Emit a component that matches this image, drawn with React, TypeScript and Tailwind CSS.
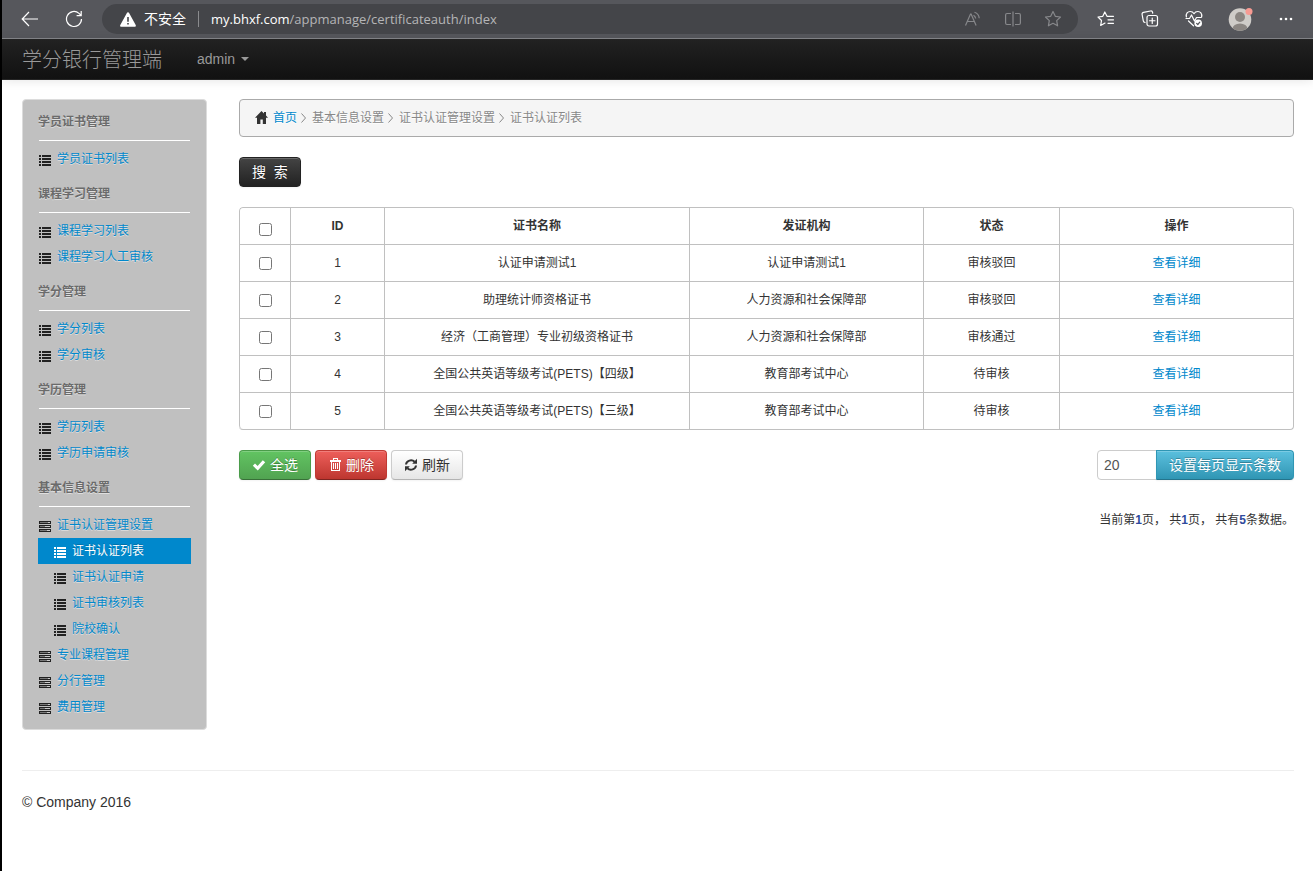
import { useState } from "react";
import type { ReactNode } from "react";
import clsx from "clsx";

type MenuItem = {
    name: string;
    icon: "list" | "tasks";
    sub?: boolean;
    active?: boolean;
};

type MenuGroup = {
    title: string;
    items: MenuItem[];
};

type Certificate = {
    id: number;
    name: string;
    org: string;
    status: string;
};

const menu: MenuGroup[] = [
    { title: "学员证书管理", items: [{ name: "学员证书列表", icon: "list" }] },
    {
        title: "课程学习管理",
        items: [
            { name: "课程学习列表", icon: "list" },
            { name: "课程学习人工审核", icon: "list" },
        ],
    },
    {
        title: "学分管理",
        items: [
            { name: "学分列表", icon: "list" },
            { name: "学分审核", icon: "list" },
        ],
    },
    {
        title: "学历管理",
        items: [
            { name: "学历列表", icon: "list" },
            { name: "学历申请审核", icon: "list" },
        ],
    },
    {
        title: "基本信息设置",
        items: [
            { name: "证书认证管理设置", icon: "tasks" },
            { name: "证书认证列表", icon: "list", sub: true, active: true },
            { name: "证书认证申请", icon: "list", sub: true },
            { name: "证书审核列表", icon: "list", sub: true },
            { name: "院校确认", icon: "list", sub: true },
            { name: "专业课程管理", icon: "tasks" },
            { name: "分行管理", icon: "tasks" },
            { name: "费用管理", icon: "tasks" },
        ],
    },
];

const certificates: Certificate[] = [
    { id: 1, name: "认证申请测试1", org: "认证申请测试1", status: "审核驳回" },
    { id: 2, name: "助理统计师资格证书", org: "人力资源和社会保障部", status: "审核驳回" },
    { id: 3, name: "经济（工商管理）专业初级资格证书", org: "人力资源和社会保障部", status: "审核通过" },
    { id: 4, name: "全国公共英语等级考试(PETS)【四级】", org: "教育部考试中心", status: "待审核" },
    { id: 5, name: "全国公共英语等级考试(PETS)【三级】", org: "教育部考试中心", status: "待审核" },
];

/* ---------- Icons ---------- */

function ListIcon() {
    return (
        <svg width="14" height="14" viewBox="0 0 14 14" fill="currentColor" shapeRendering="crispEdges">
            <path d="M1 1h2v2H1zM4 1h9v2H4zM1 4h2v2H1zM4 4h9v2H4zM1 7h2v2H1zM4 7h9v2H4zM1 10h2v2H1zM4 10h9v2H4z" />
        </svg>
    );
}

function TasksIcon() {
    return (
        <svg width="14" height="14" viewBox="0 0 14 14" fill="currentColor" shapeRendering="crispEdges">
            <path d="M1 1h12v3H1zM1 5h12v3H1zM1 9h12v3H1z" />
            <path d="M2 2h8v1H2zM2 6h5v1H2zM2 10h7v1H2z" fill="#777" />
            <path d="M10 2h2v1h-2zM7 6h5v1H7zM9 10h3v1H9z" fill="#ccc" />
        </svg>
    );
}

function HomeIcon() {
    return (
        <svg width="14" height="14" viewBox="0 0 14 14" fill="#333">
            <path d="M6.5 0 0 6.700h2V13h3.400V8.600h2.400V13H11V6.700h2L11 4.600V1H9v1.500z" />
        </svg>
    );
}

function OkIcon() {
    return (
        <svg width="14" height="14" viewBox="0 0 14 14" fill="currentColor">
            <path d="M.8 7.800 3 5.600l2.600 2.500 5.200-5.900 2.400 2-7.400 8.200z" />
        </svg>
    );
}

function TrashIcon() {
    return (
        <svg width="14" height="14" viewBox="0 0 14 14" fill="none" stroke="currentColor" shapeRendering="crispEdges">
            <path d="M2 2.500h11M5.500 2V.5h4V2M3.500 4v8.500h8V4M5.500 5v6M7.500 5v6M9.500 5v6" />
            <path d="M2 3.500h11" />
        </svg>
    );
}

function RefreshIcon() {
    return (
        <svg width="14" height="14" viewBox="0 0 14 14" fill="none" stroke="#333" strokeWidth="2">
            <path d="M2 6.500A5 4.600 0 0 1 10.600 3.800M12 7.500A5 4.600 0 0 1 3.400 10.200" />
            <path d="M13 .8v5H8.200zM1 13.200v-5h4.800z" fill="#333" stroke="none" />
        </svg>
    );
}

function Crumb({ children }: { children: ReactNode }) {
    return (
        <li className="flex items-center">
            <svg className="mr-[5px] ml-[3px] shrink-0" width="7" height="12" viewBox="0 0 7 12" fill="none" stroke="#888">
                <path d="M1.500 1.500 5.500 6l-4 4.500" />
            </svg>
            {children}
        </li>
    );
}

/* ---------- Browser bar ---------- */

function BrowserBar() {
    const cell = "flex h-8 w-11 shrink-0 items-center justify-center";

    return (
        <header className="flex h-[39px] items-center border-b border-[#86878b] bg-[#56575c] pr-[5px] pl-1.5 font-['Open_Sans','Noto_Sans_CJK_SC',sans-serif] text-sm text-white">
            <button type="button" aria-label="后退" className={cell}>
                <svg width="18" height="16" viewBox="0 0 18 16" fill="none" stroke="currentColor" strokeWidth="1.2">
                    <path d="M17 8H1.500M8 1 1.200 8 8 15" />
                </svg>
            </button>
            <button type="button" aria-label="刷新页面" className={cell}>
                <svg width="18" height="18" viewBox="0 0 18 18" fill="none" stroke="currentColor" strokeWidth="1.2">
                    <path d="M16.500 9A7.500 7.500 0 1 1 14 3.400L16 5.300M16.200 1v4.600h-4.600" />
                </svg>
            </button>

            <div className="ml-1.5 flex h-[30px] min-w-0 flex-1 items-center rounded-full bg-[#444549] pr-[5px] pl-[18px]">
                <svg className="shrink-0" width="16" height="15" viewBox="0 0 16 15">
                    <path d="M8 .3c.5 0 .9.3 1.100.7l6.600 12c.4.9-.1 1.800-1 1.800H1.300c-1 0-1.500-.9-1-1.800l6.600-12C7.100.6 7.500.3 8 .3z" fill="#fff" />
                    <path d="M7.200 5h1.600v4.800H7.200zM7.200 11h1.600v1.500H7.200z" fill="#444549" />
                </svg>
                <span className="ml-2 shrink-0">不安全</span>
                <span className="mx-3 h-4 w-px shrink-0 bg-[#8a8b8e]" />
                <span className="min-w-0 flex-1 truncate text-[13px] text-[#b5b5b7]">
                    <span className="text-white">my.bhxf.com</span>/appmanage/certificateauth/index
                </span>
                <div className="flex shrink-0 text-[#87888b]">
                    <button type="button" aria-label="大声朗读" className="flex w-10 items-center justify-center">
                        <svg width="18" height="16" viewBox="0 0 18 16" fill="none" stroke="currentColor" strokeWidth="1.2">
                            <path d="M1.500 14.500 6.500 3h.6l5 11.500M3.300 10.500h7M9.500 4.300c1.300.7 2 1.700 2.200 3.200M10.500 1.200c2.900 1 4.500 3 4.700 6" />
                        </svg>
                    </button>
                    <button type="button" aria-label="拆分屏幕" className="flex w-10 items-center justify-center">
                        <svg width="16" height="16" viewBox="0 0 16 16" fill="none" stroke="currentColor" strokeWidth="1.2">
                            <path d="M6 2.500H2A1.500 1.500 0 0 0 .6 4v8A1.500 1.500 0 0 0 2 13.500h4M10 2.500h4A1.500 1.500 0 0 1 15.400 4v8a1.500 1.500 0 0 1-1.400 1.500h-4M8 .5v15" />
                        </svg>
                    </button>
                    <button type="button" aria-label="收藏此页" className="flex w-10 items-center justify-center">
                        <svg width="18" height="18" viewBox="0 0 18 18" fill="none" stroke="currentColor" strokeWidth="1.2" strokeLinejoin="round">
                            <path d="m9 1.500 2.300 4.800 5.200.7-3.800 3.600.9 5.200L9 13.300l-4.600 2.500.9-5.200L1.500 7l5.200-.7z" />
                        </svg>
                    </button>
                </div>
            </div>

            <button type="button" aria-label="收藏夹" className={clsx(cell, "ml-1.5")}>
                <svg width="18" height="18" viewBox="0 0 18 18" fill="none" stroke="currentColor" strokeWidth="1.2" strokeLinecap="round" strokeLinejoin="round">
                    <path d="M16.500 6.300H10L7.800 2 5.800 6.300 1 7l3.500 3.500-.8 5L8 13.100M11 9.800h5.500M11 13.300h5.500" />
                </svg>
            </button>
            <button type="button" aria-label="集锦" className={cell}>
                <svg width="18" height="18" viewBox="0 0 18 18" fill="none" stroke="currentColor" strokeWidth="1.2" strokeLinecap="round">
                    <rect x="6" y="5.5" width="10.5" height="10.5" rx="2" />
                    <path d="M11.250 8v5.500M8.500 10.750H14M4 12.500c-.9-.2-1.500-.8-1.700-1.700L1.100 4.500c-.2-1 .4-1.900 1.400-2.100L9.500 1c1-.2 1.900.4 2.100 1.400l.1.800" />
                </svg>
            </button>
            <button type="button" aria-label="浏览器概要" className={cell}>
                <svg width="18" height="18" viewBox="0 0 18 18" fill="none" stroke="currentColor" strokeWidth="1.2" strokeLinecap="round" strokeLinejoin="round">
                    <path d="M1.400 7C.6 3.500 2.800 1.500 5.200 1.500 7 1.500 8.300 2.500 9 3.700c.7-1.200 2-2.200 3.800-2.200 2.400 0 4.600 2 3.800 5.500M1 8.500h3.500l2-3.500 3 6 2-3.500h4.500M3.500 11l5 4.800" />
                    <circle cx="13.2" cy="13.2" r="3.8" fill="currentColor" stroke="none" />
                    <path d="m11.600 13.300 1.200 1.200 2-2.300" stroke="#56575c" />
                </svg>
            </button>
            <button type="button" aria-label="个人资料" className="flex h-8 w-12 shrink-0 items-center justify-center">
                <svg width="26" height="24" viewBox="0 0 26 24">
                    <clipPath id="avatar">
                        <circle cx="13" cy="12.5" r="11.3" />
                    </clipPath>
                    <g clipPath="url(#avatar)">
                        <path d="M0 0h26v24H0z" fill="#cfccc8" />
                        <circle cx="13" cy="10" r="5" fill="#8b8682" />
                        <ellipse cx="13" cy="22" rx="7.5" ry="5.5" fill="#8b8682" />
                    </g>
                    <circle cx="22" cy="4.5" r="3.5" fill="#f79a92" />
                </svg>
            </button>
            <button type="button" aria-label="设置及其他" className={cell}>
                <svg width="14" height="4" viewBox="0 0 14 4" fill="currentColor">
                    <circle cx="2" cy="2" r="1.3" />
                    <circle cx="7" cy="2" r="1.3" />
                    <circle cx="12" cy="2" r="1.3" />
                </svg>
            </button>
        </header>
    );
}

/* ---------- Sidebar ---------- */

function Sidebar() {
    return (
        <nav className="w-[185px] shrink-0 rounded border border-[#dcdcdc] bg-[#c0c0c0] px-[15px] pb-[9px] text-xs text-shadow-[0_1px_0_rgba(255,255,255,0.5)]">
            {menu.map((group) => (
                <section key={group.title}>
                    <h3 className="pt-2.5 pb-1.5 leading-6 font-bold text-[#6b6b6b]">{group.title}</h3>
                    <hr className="mx-px mb-[5px] border-white" />
                    <ul>
                        {group.items.map((item) => (
                            <li key={item.name}>
                                <a
                                    href="#"
                                    className={clsx(
                                        "flex h-[26px] items-center gap-[5px]",
                                        item.sub && "pl-[15px]",
                                        item.active ? "bg-[#0088cc] text-white text-shadow-[0_-1px_0_rgba(0,0,0,0.2)]" : "text-[#0088cc]"
                                    )}
                                >
                                    <span className={clsx("mt-1", item.active ? "text-white" : "text-[#222]")}>
                                        {item.icon === "list" ? <ListIcon /> : <TasksIcon />}
                                    </span>
                                    {item.name}
                                </a>
                            </li>
                        ))}
                    </ul>
                </section>
            ))}
        </nav>
    );
}

/* ---------- Table ---------- */

function CertificateTable({ selected, onToggle, onToggleAll }: {
    selected: number[];
    onToggle: (id: number) => void;
    onToggleAll: () => void;
}) {
    const cell = "h-[37px] border-t border-l border-[#c0c0c0] text-center";

    return (
        <div className="overflow-hidden rounded border-r border-b border-[#c0c0c0]">
            <table className="w-full table-fixed border-separate border-spacing-0 text-xs">
                <colgroup>
                    <col className="w-[51px]" />
                    <col className="w-[94px]" />
                    <col className="w-[305px]" />
                    <col className="w-[234px]" />
                    <col className="w-[136px]" />
                    <col className="w-[234px]" />
                </colgroup>
                <thead>
                    <tr>
                        <th className={clsx(cell, "rounded-tl")}>
                            <input
                                type="checkbox"
                                aria-label="全选"
                                className="mt-1.5 size-[13px] align-middle"
                                checked={selected.length === certificates.length}
                                onChange={onToggleAll}
                            />
                        </th>
                        <th className={cell}>ID</th>
                        <th className={cell}>证书名称</th>
                        <th className={cell}>发证机构</th>
                        <th className={cell}>状态</th>
                        <th className={cell}>操作</th>
                    </tr>
                </thead>
                <tbody className="[&>tr:last-child>td:first-child]:rounded-bl">
                    {certificates.map((item) => (
                        <tr key={item.id}>
                            <td className={cell}>
                                <input
                                    type="checkbox"
                                    aria-label={item.name}
                                    className="size-[13px] align-middle"
                                    checked={selected.includes(item.id)}
                                    onChange={() => onToggle(item.id)}
                                />
                            </td>
                            <td className={cell}>{item.id}</td>
                            <td className={cell}>{item.name}</td>
                            <td className={cell}>{item.org}</td>
                            <td className={cell}>{item.status}</td>
                            <td className={cell}>
                                <a href="#" className="text-[#0088cc]">查看详细</a>
                            </td>
                        </tr>
                    ))}
                </tbody>
            </table>
        </div>
    );
}

export default function App() {
    const [selected, setSelected] = useState<number[]>([]);
    const [pageSize, setPageSize] = useState("20");

    const toggle = (id: number) => {
        setSelected(selected.includes(id) ? selected.filter((s) => s !== id) : [...selected, id]);
    };

    const toggleAll = () => {
        setSelected(selected.length === certificates.length ? [] : certificates.map((c) => c.id));
    };

    const btn = "flex h-[30px] items-center gap-1 rounded border px-3 text-sm shadow-[inset_0_1px_0_rgba(255,255,255,0.2),0_1px_2px_rgba(0,0,0,0.05)]";
    const lightText = "text-white text-shadow-[0_-1px_0_rgba(0,0,0,0.25)]";

    return (
        <div className="min-h-screen border-l-2 border-black bg-white font-['Liberation_Sans','Noto_Sans_CJK_SC',sans-serif] text-[#333]">
            <BrowserBar />

            {/* Navbar */}
            <div className="flex h-[41px] items-center border-b border-[#252525] bg-linear-to-b from-[#222] to-[#111] px-5 text-[#999] shadow-[0_1px_10px_rgba(0,0,0,0.1)]">
                <a href="#" className="pt-0.5 text-xl font-light">学分银行管理端</a>
                <button type="button" className="ml-[35px] flex items-center gap-1.5 text-sm">
                    admin
                    <svg width="8" height="4" viewBox="0 0 8 4" fill="currentColor">
                        <path d="M0 0h8L4 4z" />
                    </svg>
                </button>
            </div>

            <div className="pt-[19px] pr-[19px] pl-5">
                <div className="flex items-start gap-8">
                    <Sidebar />

                    <main className="flex min-w-0 flex-1 flex-col gap-5">
                        <ul className="flex h-[38px] items-center rounded border border-[#aaa] bg-[#f5f5f5] px-[15px] text-xs text-[#888] text-shadow-[0_1px_0_#fff]">
                            <li className="flex items-center gap-1">
                                <HomeIcon />
                                <a href="#" className="text-[#0088cc]">首页</a>
                            </li>
                            <Crumb>基本信息设置</Crumb>
                            <Crumb>证书认证管理设置</Crumb>
                            <Crumb>证书认证列表</Crumb>
                        </ul>

                        <div>
                            <button type="button" className={clsx(btn, lightText, "border-[#222] bg-linear-to-b from-[#444] to-[#222] whitespace-pre")}>
                                {"搜  索"}
                            </button>
                        </div>

                        <CertificateTable selected={selected} onToggle={toggle} onToggleAll={toggleAll} />

                        <div className="flex items-start justify-between">
                            <div className="flex gap-1">
                                <button type="button" onClick={toggleAll} className={clsx(btn, lightText, "border-[#4a9c4a] border-b-[#387038] bg-linear-to-b from-[#62c462] to-[#51a351]")}>
                                    <OkIcon />
                                    全选
                                </button>
                                <button type="button" className={clsx(btn, lightText, "border-[#c13a34] border-b-[#802420] bg-linear-to-b from-[#ee5f5b] to-[#bd362f]")}>
                                    <TrashIcon />
                                    删除
                                </button>
                                <button type="button" className={clsx(btn, "border-[#ccc] border-b-[#b3b3b3] bg-linear-to-b from-white to-[#e6e6e6]")}>
                                    <RefreshIcon />
                                    刷新
                                </button>
                            </div>

                            <div className="flex">
                                <input
                                    type="text"
                                    aria-label="每页显示条数"
                                    value={pageSize}
                                    onChange={(e) => setPageSize(e.target.value)}
                                    className="h-[30px] w-[60px] rounded-l border border-[#ccc] px-1.5 text-sm text-[#555]"
                                />
                                <button type="button" className={clsx(btn, lightText, "-ml-px rounded-l-none border-[#2f96b4] border-b-[#24748c] bg-linear-to-b from-[#5bc0de] to-[#2f96b4]")}>
                                    设置每页显示条数
                                </button>
                            </div>
                        </div>

                        <p className="mt-2.5 text-right text-xs leading-5">
                            当前第<b className="text-[#2f4a9c]">1</b>页， 共<b className="text-[#2f4a9c]">1</b>页， 共有<b className="text-[#2f4a9c]">5</b>条数据。
                        </p>
                    </main>
                </div>

                <hr className="mt-10 mb-[21px] border-[#eee]" />
                <footer className="pb-5 text-sm">© Company 2016</footer>
            </div>
        </div>
    );
}
